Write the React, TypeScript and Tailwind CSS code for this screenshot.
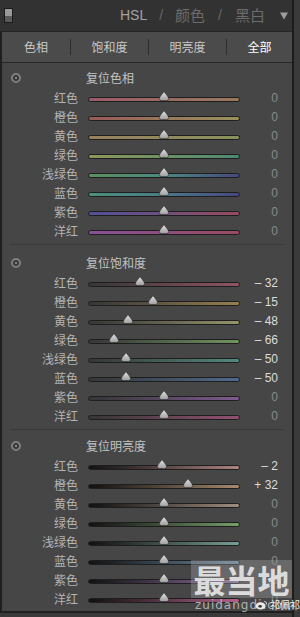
import React from "react";

type Row = { label: string; grad: string; v: number };

const hue: Row[] = [
  { label: "红色", grad: "from-[#9c5a6a] to-[#97795c]", v: 0 },
  { label: "橙色", grad: "from-[#985a5a] to-[#98925c]", v: 0 },
  { label: "黄色", grad: "from-[#98805e] to-[#88925c]", v: 0 },
  { label: "绿色", grad: "from-[#8c985a] to-[#4a8a70]", v: 0 },
  { label: "浅绿色", grad: "from-[#5a905c] via-[#4a8a80] to-[#464680]", v: 0 },
  { label: "蓝色", grad: "from-[#4a907a] via-[#4a7a8a] to-[#46467e]", v: 0 },
  { label: "紫色", grad: "from-[#50509a] via-[#70507e] to-[#984a5e]", v: 0 },
  { label: "洋红", grad: "from-[#8a5098] via-[#904e80] to-[#984a5e]", v: 0 },
];

const sat: Row[] = [
  { label: "红色", grad: "from-[#363636] to-[#905462]", v: -32 },
  { label: "橙色", grad: "from-[#363636] to-[#96804e]", v: -15 },
  { label: "黄色", grad: "from-[#363636] to-[#96946a]", v: -48 },
  { label: "绿色", grad: "from-[#363636] to-[#6e9660]", v: -66 },
  { label: "浅绿色", grad: "from-[#363636] to-[#508a7e]", v: -50 },
  { label: "蓝色", grad: "from-[#363636] to-[#4e6a90]", v: -50 },
  { label: "紫色", grad: "from-[#363636] to-[#7e5a90]", v: 0 },
  { label: "洋红", grad: "from-[#363636] to-[#945072]", v: 0 },
];

const lum: Row[] = [
  { label: "红色", grad: "from-[#121212] to-[#b08484]", v: -2 },
  { label: "橙色", grad: "from-[#121212] to-[#a88a6e]", v: 32 },
  { label: "黄色", grad: "from-[#121212] to-[#a08e80]", v: 0 },
  { label: "绿色", grad: "from-[#121212] to-[#76a06a]", v: 0 },
  { label: "浅绿色", grad: "from-[#121212] to-[#78a096]", v: 0 },
  { label: "蓝色", grad: "from-[#121212] to-[#6c8ea8]", v: 0 },
  { label: "紫色", grad: "from-[#121212] to-[#9270a8]", v: 0 },
  { label: "洋红", grad: "from-[#121212] to-[#b0608a]", v: 0 },
];

function fmt(v: number) {
  if (v === 0) return "0";
  return (v < 0 ? "– " : "+ ") + Math.abs(v);
}

function Thumb() {
  return (
    <svg width="10" height="10" viewBox="0 0 10 10">
      <defs>
        <linearGradient id="tg" x1="0" y1="0" x2="0" y2="1">
          <stop offset="0" stopColor="#e6e6e6" />
          <stop offset="1" stopColor="#9c9c9c" />
        </linearGradient>
      </defs>
      <path d="M5 0.5 C6 2.5 9.6 5.5 9.6 7.6 Q9.6 9.6 7.6 9.6 L2.4 9.6 Q0.4 9.6 0.4 7.6 C0.4 5.5 4 2.5 5 0.5Z" fill="url(#tg)" stroke="#2a2a2a" strokeWidth="0.6" />
    </svg>
  );
}

function SliderRow({ row }: { row: Row }) {
  return (
    <div className="flex items-center h-[19px]">
      <div className="w-[76px] text-right text-[12px] text-[#b4b4b4] leading-none">{row.label}</div>
      <div className="relative ml-[10px] w-[152px] h-[19px] flex items-center">
        <div className={`w-full h-[5px] mt-[3px] rounded-full border border-[#1e1e1e] bg-linear-to-r ${row.grad}`} />
        <div className="absolute top-[3px] -translate-x-1/2 flex" style={{ left: `${(row.v + 100) / 2}%` }}>
          <Thumb />
        </div>
      </div>
      <div
        className={`w-[38px] text-right text-[12px] leading-none font-['Liberation_Sans',sans-serif] ${row.v === 0 ? "text-[#8a8a8a]" : "text-[#dcdcdc]"}`}
      >
        {fmt(row.v)}
      </div>
    </div>
  );
}

function Section({ title, rows, pad }: { title: string; rows: Row[]; pad: string }) {
  return (
    <div className={pad}>
      <div className="flex items-center h-[20px]">
        <div className="w-[28px] flex justify-center">
          <div className="w-[10px] h-[10px] rounded-full border-2 border-[#7e7e7e] bg-[#3a3a3a] flex items-center justify-center">
            <div className="w-[2px] h-[2px] rounded-full bg-[#9a9a9a]" />
          </div>
        </div>
        <div className="pl-[56px] text-[12px] text-[#c2c2c2] leading-none">{title}</div>
      </div>
      {rows.map((r) => (
        <SliderRow key={r.label} row={r} />
      ))}
    </div>
  );
}

export default function App() {
  return (
    <div className="relative w-[300px] h-[617px] bg-[#3a3a3a] overflow-hidden font-['Noto_Sans_CJK_SC',sans-serif]">
      <div className="w-[294px] h-full border-r-2 border-[#1c1c1c] flex flex-col">
        <div className="h-[31px] bg-[#323232] flex items-center">
          <div className="ml-[4px] w-[9px] h-[15px] border border-[#1a1a1a] flex flex-col">
            <div className="h-1/2 bg-[#9a9a9a]" />
            <div className="h-1/2 bg-[#5a5a5a]" />
          </div>
          <div className="ml-auto flex items-center pr-[4px]">
            <span className="text-[14px] text-[#a2a2a2] font-['Liberation_Sans',sans-serif]">HSL</span>
            <span className="mx-[12px] text-[14px] text-[#666] font-['Liberation_Sans',sans-serif]">/</span>
            <span className="text-[15px] text-[#6c6c6c]">颜色</span>
            <span className="mx-[13px] text-[14px] text-[#666] font-['Liberation_Sans',sans-serif]">/</span>
            <span className="text-[15px] text-[#6c6c6c]">黑白</span>
            <svg className="ml-[15px]" width="8" height="8" viewBox="0 0 8 8">
              <path d="M0 0.5 H8 L4 7.5Z" fill="#9c9c9c" />
            </svg>
          </div>
        </div>
        <div className="flex-1 mb-[4px] border-l-2 border-b-2 border-[#202020] bg-[#464646] flex flex-col">
          <div className="h-[32px] border-t border-b border-[#262626] bg-[#4b4b4b] flex items-center text-[12px] text-[#c8c8c8]">
            <div className="w-[68px] text-center">色相</div>
            <div className="w-px h-[16px] bg-[#2e2e2e]" />
            <div className="w-[77px] text-center">饱和度</div>
            <div className="w-px h-[16px] bg-[#2e2e2e]" />
            <div className="w-[77px] text-center">明亮度</div>
            <div className="w-px h-[16px] bg-[#2e2e2e]" />
            <div className="flex-1 text-center text-white">全部</div>
          </div>
          <Section title="复位色相" rows={hue} pad="pt-[5px] pb-[4px]" />
          <div className="mx-[8px] h-px bg-[#3a3a3a]" />
          <Section title="复位饱和度" rows={sat} pad="pt-[8px] pb-[4px]" />
          <div className="mx-[8px] h-px bg-[#3a3a3a]" />
          <Section title="复位明亮度" rows={lum} pad="pt-[6px]" />
        </div>
      </div>

      <div className="absolute left-[191px] top-[560px] w-[101px] h-[38px] bg-[#9a9a9a]/40 flex items-center justify-center">
        <span className="text-[32px] font-bold leading-none text-[#ececec]/90">最当地</span>
      </div>
      <div className="absolute left-[195px] top-[599px] text-[12px] leading-none tracking-[1px] text-[#cfcfcf]/80 font-['DejaVu_Sans',sans-serif]">
        zuidangdi.com
      </div>
      <div className="absolute left-[255px] top-[600px] flex items-center gap-[2px] whitespace-nowrap">
        <svg width="13" height="10" viewBox="0 0 14 11">
          <ellipse cx="6" cy="6.5" rx="5.5" ry="4" fill="#e8e8e8" />
          <ellipse cx="5.5" cy="7" rx="2" ry="1.6" fill="#333" />
          <path d="M10 1.5 Q13 1.8 12.8 5" stroke="#e8e8e8" strokeWidth="1" fill="none" />
        </svg>
        <span className="text-[10px] leading-none text-[#f0f0f0]">祁佩祁</span>
      </div>
    </div>
  );
}
